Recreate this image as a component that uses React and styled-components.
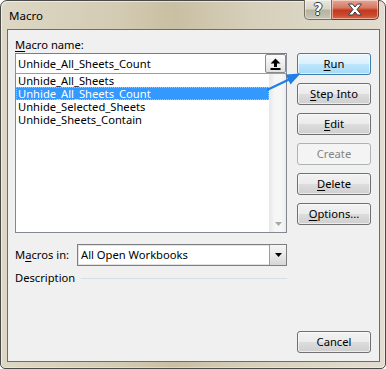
import React from "react";
import styled, { createGlobalStyle } from "styled-components";

const Global = createGlobalStyle`
  html, body { margin: 0; padding: 0; background: #ffffff; }
  body { font-family: "Noto Sans", "Segoe UI", sans-serif; font-size: 11.2px; color: #000; }
  * { box-sizing: border-box; }
`;

const Window = styled.div`
  position: relative;
  width: 386px;
  height: 369px;
  border: 1px solid #4a4a4a;
  border-radius: 7px 7px 5px 5px;
  background: linear-gradient(90deg, #ddd7c5 0%, #d3cbb3 30%, #c9bfa2 45%, #d6cfba 65%, #e2ddd0 100%);
  box-shadow: inset 1px 1px 0 rgba(255,255,255,0.55), inset -1px -1px 0 rgba(255,255,255,0.35);
  display: flex;
  flex-direction: column;
  padding: 0 5px 6px 6px;
`;

const TitleBar = styled.div`
  height: 28px;
  display: flex;
  align-items: flex-start;
  justify-content: space-between;
  padding-left: 2px;
`;

const Title = styled.div`
  padding-top: 7px;
  font-size: 11.5px;
  line-height: 16px;
  color: #000;
`;

const Caption = styled.div`
  display: flex;
  margin-top: -1px;
  margin-right: 1px;
`;

const CaptionButton = styled.div`
  width: ${(p) => p.$w}px;
  height: 20px;
  display: flex;
  align-items: center;
  justify-content: center;
  border: 1px solid ${(p) => (p.$close ? "#6e3b30" : "#72705f")};
  border-top: none;
  border-radius: ${(p) => (p.$close ? "0 0 5px 0" : "0 0 0 5px")};
  ${(p) => (p.$close ? "border-left: none;" : "")}
  background: ${(p) =>
    p.$close
      ? "linear-gradient(180deg, #e6a797 0%, #d47a62 40%, #c2391f 55%, #c94a2c 80%, #dc6a4a 100%)"
      : "linear-gradient(180deg, #ebe7dc 0%, #d9d4c6 45%, #b9b3a2 55%, #c8c3b4 100%)"};
  box-shadow: inset 0 0 0 1px rgba(255,255,255,0.45);
  color: #fff;
  font-family: "DejaVu Sans", sans-serif;
  font-weight: bold;
  font-size: 15px;
  text-shadow: -1px 0 #3b3b3b, 1px 0 #3b3b3b, 0 -1px #3b3b3b, 0 1px #3b3b3b;
`;

const Client = styled.div`
  flex: 1;
  border: 1px solid #6f6c60;
  background: #f0f0f0;
  padding: 6px 8px 8px 7px;
  display: grid;
  grid-template-columns: 272px 74px;
  column-gap: 10px;
`;

const LeftCol = styled.div`
  display: flex;
  flex-direction: column;
`;

const RightCol = styled.div`
  display: flex;
  flex-direction: column;
  gap: 8px;
  padding-top: 17px;
`;

const Label = styled.div`
  line-height: 17px;
  height: 17px;
  white-space: nowrap;
`;

const Key = styled.span`
  text-decoration: underline;
  text-underline-offset: 2px;
`;

const TextBox = styled.div`
  height: 21px;
  border: 1px solid #8d9097;
  border-top-color: #7a7d84;
  background: #fff;
  display: flex;
  align-items: center;
  justify-content: space-between;
  padding: 0 0 0 2px;
  line-height: 16px;
`;

const MiniButton = styled.div`
  width: 21px;
  height: 19px;
  border: 1px solid #8a8b8c;
  border-radius: 2px;
  background: linear-gradient(180deg, #fdfdfd 0%, #eeeeee 50%, #e0e0e0 100%);
  display: flex;
  align-items: center;
  justify-content: center;
`;

const List = styled.div`
  height: 160px;
  border: 1px solid #828790;
  border-top-color: #9a9ca3;
  background: #fff;
  display: flex;
  margin-top: -1px;
`;

const Items = styled.div`
  flex: 1;
  display: flex;
  flex-direction: column;
`;

const Item = styled.div`
  height: 13px;
  line-height: 13px;
  padding-left: 2px;
  white-space: nowrap;
  background: ${(p) => (p.$selected ? "#3399ff" : "transparent")};
  color: ${(p) => (p.$selected ? "#fff" : "#000")};
  outline: ${(p) => (p.$selected ? "1px dotted #f0b070" : "none")};
  outline-offset: -1px;
`;

const ScrollTrack = styled.div`
  width: 17px;
  background: linear-gradient(90deg, #e9e9e9 0%, #f6f6f6 30%, #f6f6f6 70%, #ececec 100%);
  border-left: 1px solid #eaeaea;
  display: flex;
  align-items: flex-end;
  justify-content: center;
  padding-bottom: 6px;
`;

const SelectRow = styled.div`
  display: flex;
  align-items: center;
  margin-top: 11px;
`;

const SelectLabel = styled.div`
  width: 62px;
  line-height: 16px;
`;

const Select = styled.div`
  flex: 1;
  height: 22px;
  border: 1px solid #7f7f7f;
  background: #fff;
  display: flex;
  align-items: stretch;
  justify-content: space-between;
  padding-left: 3px;
  box-shadow: inset 0 0 0 1px #e2e2e2;
`;

const SelectText = styled.div`
  line-height: 20px;
`;

const DropButton = styled.div`
  width: 17px;
  border-left: 1px solid #9d9d9d;
  background: linear-gradient(180deg, #f6f6f6 0%, #e9e9e9 50%, #d6d6d6 100%);
  display: flex;
  align-items: center;
  justify-content: center;
`;

const DescRow = styled.div`
  display: flex;
  align-items: center;
  gap: 6px;
  margin-top: 4px;
`;

const DescLine = styled.div`
  flex: 1;
  height: 1px;
  background: #d5dfe5;
  margin-top: 1px;
`;

const Button = styled.div`
  height: 22px;
  border: 1px solid ${(p) => (p.$default ? "#3c7fb1" : p.$disabled ? "#adb2b5" : "#707070")};
  border-radius: 3px;
  display: flex;
  align-items: center;
  justify-content: center;
  line-height: 16px;
  color: ${(p) => (p.$disabled ? "#838383" : "#000")};
  background: ${(p) =>
    p.$default
      ? "linear-gradient(180deg, #eaf6fd 0%, #d9f0fc 50%, #bee6fd 50%, #a7d9f5 100%)"
      : p.$disabled
      ? "#f4f4f4"
      : "linear-gradient(180deg, #f2f2f2 0%, #ebebeb 50%, #dddddd 50%, #cfcfcf 100%)"};
  box-shadow: inset 0 0 0 1px ${(p) => (p.$disabled ? "transparent" : "rgba(255,255,255,0.6)")};
  margin-top: ${(p) => (p.$bottom ? "auto" : "0")};
`;

const Annotation = styled.svg`
  position: absolute;
  left: 0;
  top: 0;
  pointer-events: none;
`;

export default function App() {
  return (
    <>
      <Global />
      <Window>
        <TitleBar>
          <Title>Macro</Title>
          <Caption>
            <CaptionButton $w={28}>?</CaptionButton>
            <CaptionButton $w={47} $close>
              <svg width="16" height="13" viewBox="0 0 16 13">
                <path
                  d="M1.5 1 H5.5 L8 4 L10.5 1 H14.5 L10 6.5 L14.5 12 H10.5 L8 9 L5.5 12 H1.5 L6 6.5 Z"
                  fill="#fff"
                  stroke="#3d3d3d"
                  strokeWidth="1"
                  strokeLinejoin="round"
                />
              </svg>
            </CaptionButton>
          </Caption>
        </TitleBar>
        <Client>
          <LeftCol>
            <Label>
              <Key>M</Key>acro name:
            </Label>
            <TextBox>
              <span>Unhide_All_Sheets_Count</span>
              <MiniButton>
                <svg width="11" height="12" viewBox="0 0 11 12">
                  <path d="M5.5 0.5 L10.5 5.5 H7 V9 H4 V5.5 H0.5 Z" fill="#000" />
                  <rect x="0.5" y="10" width="10" height="2" fill="#000" />
                </svg>
              </MiniButton>
            </TextBox>
            <List>
              <Items>
                <Item>Unhide_All_Sheets</Item>
                <Item $selected>Unhide_All_Sheets_Count</Item>
                <Item>Unhide_Selected_Sheets</Item>
                <Item>Unhide_Sheets_Contain</Item>
              </Items>
              <ScrollTrack>
                <svg width="7" height="4" viewBox="0 0 7 4">
                  <path d="M0 0 H7 L3.5 4 Z" fill="#a8a8a8" />
                </svg>
              </ScrollTrack>
            </List>
            <SelectRow>
              <SelectLabel>
                M<Key>a</Key>cros in:
              </SelectLabel>
              <Select>
                <SelectText>All Open Workbooks</SelectText>
                <DropButton>
                  <svg width="7" height="4" viewBox="0 0 7 4">
                    <path d="M0 0 H7 L3.5 4 Z" fill="#000" />
                  </svg>
                </DropButton>
              </Select>
            </SelectRow>
            <DescRow>
              <span>Description</span>
              <DescLine />
            </DescRow>
          </LeftCol>
          <RightCol>
            <Button $default>
              <span>
                <Key>R</Key>un
              </span>
            </Button>
            <Button>
              <span>
                <Key>S</Key>tep Into
              </span>
            </Button>
            <Button>
              <span>
                <Key>E</Key>dit
              </span>
            </Button>
            <Button $disabled>Create</Button>
            <Button>
              <span>
                <Key>D</Key>elete
              </span>
            </Button>
            <Button>
              <span>
                <Key>O</Key>ptions...
              </span>
            </Button>
            <Button $bottom>Cancel</Button>
          </RightCol>
        </Client>
        <Annotation width="386" height="369" viewBox="0 0 386 369">
          <path d="M267 88.5 L288 78.5" stroke="#1f7fe6" strokeWidth="2.2" strokeLinecap="round" />
          <path d="M299.5 72.5 L284.5 73.5 L289.5 83.5 Z" fill="#1f7fe6" />
        </Annotation>
      </Window>
    </>
  );
}
